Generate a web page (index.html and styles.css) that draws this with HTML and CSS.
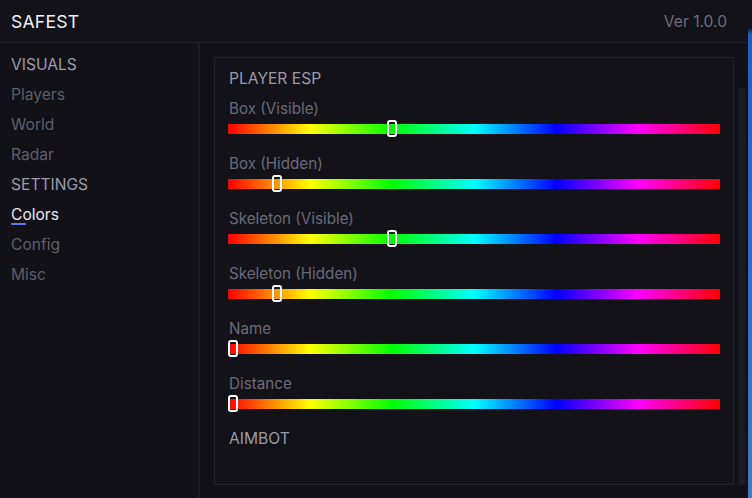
FILE: index.html
```html
<!DOCTYPE html>
<html>
<head>
<meta charset="utf-8">
<link rel="stylesheet" href="styles.css">
</head>
<body>
<div class="desktop">
  <div class="window">
    <header class="topbar">
      <div class="brand">SAFEST</div>
      <div class="version">Ver 1.0.0</div>
    </header>
    <div class="main">
      <nav class="sidebar">
        <div class="nav-section">VISUALS</div>
        <div class="nav-item">Players</div>
        <div class="nav-item">World</div>
        <div class="nav-item">Radar</div>
        <div class="nav-section">SETTINGS</div>
        <div class="nav-item active">Colors</div>
        <div class="nav-item">Config</div>
        <div class="nav-item">Misc</div>
      </nav>
      <section class="content">
        <div class="panel">
          <div class="panel-title">PLAYER ESP</div>
          <div class="row">
            <div class="label">Box (Visible)</div>
            <div class="hue"><span class="thumb" style="left:159px"></span></div>
          </div>
          <div class="row">
            <div class="label">Box (Hidden)</div>
            <div class="hue"><span class="thumb" style="left:44px"></span></div>
          </div>
          <div class="row">
            <div class="label">Skeleton (Visible)</div>
            <div class="hue"><span class="thumb" style="left:159px"></span></div>
          </div>
          <div class="row">
            <div class="label">Skeleton (Hidden)</div>
            <div class="hue"><span class="thumb" style="left:44px"></span></div>
          </div>
          <div class="row">
            <div class="label">Name</div>
            <div class="hue"><span class="thumb" style="left:0px"></span></div>
          </div>
          <div class="row">
            <div class="label">Distance</div>
            <div class="hue"><span class="thumb" style="left:0px"></span></div>
          </div>
          <div class="panel-title">AIMBOT</div>
        </div>
        <div class="scrollbar"></div>
      </section>
    </div>
  </div>
  <div class="desk-edge"></div>
</div>
</body>
</html>
```

FILE: styles.css
```css
* { box-sizing: border-box; }
html, body {
  margin: 0;
  padding: 0;
  background: #121118;
  width: 752px;
  height: 498px;
  overflow: hidden;
  font-family: "Inter", "Liberation Sans", sans-serif;
}
.desktop {
  display: flex;
  width: 752px;
  height: 498px;
}
.window {
  width: 748px;
  height: 498px;
  display: flex;
  flex-direction: column;
  background: #121118;
}
.desk-edge {
  width: 4px;
  height: 498px;
  background: linear-gradient(180deg, #12131c 0px, #12131c 28px, #1d5fc9 34px, #2a6fd6 60%, #3f7ec4 100%);
}
.topbar {
  height: 43px;
  border-bottom: 1px solid #22222b;
  display: flex;
  align-items: center;
  justify-content: space-between;
  padding: 0 21px 0 11px;
  background: #131219;
}
.brand {
  color: #f1f1f5;
  font-size: 17.6px;
  letter-spacing: 0.2px;
}
.version {
  color: #6d6d79;
  font-size: 15.6px;
  margin-top: 1px;
}
.main {
  flex: 1;
  display: flex;
  min-height: 0;
}
.sidebar {
  width: 200px;
  border-right: 2px solid #1c1c24;
  padding-top: 7px;
  background: #121117;
}
.nav-section, .nav-item {
  position: relative;
  height: 30px;
  line-height: 30px;
  padding-left: 11px;
  font-size: 15.6px;
}
.nav-section { color: #9c9cab; }
.nav-item { color: #5e5e6b; }
.nav-item.active { color: #e9e9ef; }
.nav-item.active::after {
  content: "";
  position: absolute;
  left: 11px;
  top: 23px;
  width: 15px;
  height: 2px;
  background: #5b7cf0;
  border-radius: 1px;
}
.content {
  flex: 1;
  display: flex;
  padding: 14px 3px 13px 14px;
}
.panel {
  flex: 1;
  border: 1px solid #23232c;
  padding: 11px 13px 0 13px;
  background: #131218;
}
.panel-title {
  color: #9a9aa8;
  font-size: 15.6px;
  line-height: 20px;
  height: 20px;
  padding-left: 1px;
}
.row {
  margin-top: 10px;
  margin-bottom: 20px;
}
.row + .row { margin-top: 0; }
.label {
  color: #6a6a78;
  font-size: 15.2px;
  line-height: 20px;
  height: 20px;
  margin-bottom: 5px;
  padding-left: 1px;
}
.hue {
  position: relative;
  height: 10px;
  background: linear-gradient(90deg, #ff0000 0%, #ffff00 16.67%, #00ff00 33.33%, #00ffff 50%, #0000ff 66.67%, #ff00ff 83.33%, #ff0000 100%);
}
.thumb {
  position: absolute;
  top: -4px;
  width: 10px;
  height: 17px;
  border: 2px solid #ffffff;
  border-radius: 3px;
}
.scrollbar {
  width: 6px;
  margin-left: 5px;
  margin-top: 31px;
  background: #1d1d25;
}
```
